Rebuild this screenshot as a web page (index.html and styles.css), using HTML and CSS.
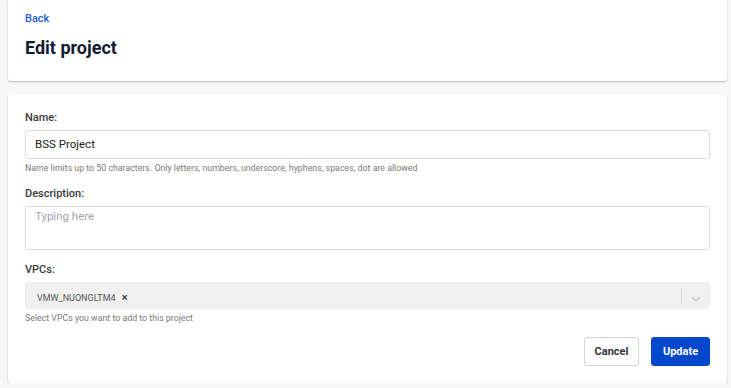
FILE: index.html
```html
<!DOCTYPE html>
<html lang="en">
<head>
    <meta charset="UTF-8">
    <title>Edit project</title>
    <link rel="stylesheet" href="styles.css">
</head>
<body>
<div class="page">
    <div class="card head-card">
        <a class="back" href="#">Back</a>
        <h1 class="title">Edit project</h1>
    </div>
    <div class="card form-card">
        <div class="field">
            <label class="label">Name:</label>
            <div class="input">BSS Project</div>
            <p class="hint">Name limits up to 50 characters. Only letters, numbers, underscore, hyphens, spaces, dot are allowed</p>
        </div>
        <div class="field">
            <label class="label">Description:</label>
            <div class="input textarea placeholder">Typing here</div>
        </div>
        <div class="field">
            <label class="label">VPCs:</label>
            <div class="select">
                <div class="tags">
                    <span class="tag">VMW_NUONGLTM4 <span class="tag-x">&times;</span></span>
                </div>
                <div class="select-arrow">
                    <svg width="12" height="12" viewBox="0 0 12 12"><path d="M2 4l4 4 4-4" fill="none" stroke="#c4c4c4" stroke-width="1.3"/></svg>
                </div>
            </div>
            <p class="hint">Select VPCs you want to add to this project</p>
        </div>
        <div class="actions">
            <button class="btn btn-cancel">Cancel</button>
            <button class="btn btn-update">Update</button>
        </div>
    </div>
</div>
</body>
</html>
```
FILE: styles.css
```css
*{
    margin: 0;
    padding: 0;
    box-sizing: border-box;
}
body{
    background-color: #f7f7f7;
    font-family: Roboto, "Liberation Sans", sans-serif;
    color: #333;
}
.page{
    padding: 0 4px 0 8px;
    display: flex;
    flex-direction: column;
    gap: 13px;
}
.card{
    background-color: #ffffff;
    border-radius: 3px;
    box-shadow: 0 1px 2px rgba(0,0,0,0.25);
    padding: 0 17px;
}
.head-card{
    height: 81px;
    border-top-left-radius: 0;
    border-top-right-radius: 0;
    padding-top: 12px;
}
.back{
    display: block;
    font-size: 11px;
    font-weight: 500;
    color: #1c5bd1;
    text-decoration: none;
    line-height: 14px;
}
.title{
    margin-top: 10px;
    font-size: 18px;
    font-weight: 700;
    color: #121a33;
    line-height: 24px;
}
.form-card{
    height: 289px;
    padding-top: 17px;
}
.field{
    margin-bottom: 13px;
}
.label{
    display: block;
    font-size: 11px;
    font-weight: 500;
    color: #3a3a3a;
    line-height: 14px;
    margin-bottom: 5px;
}
.input{
    height: 29px;
    border: 1px solid #dcdcdc;
    border-radius: 3px;
    padding: 0 9px;
    font-size: 11.5px;
    line-height: 27px;
    color: #222;
}
.textarea{
    height: 44px;
    line-height: 16px;
    padding-top: 1px;
}
.placeholder{
    color: #a3a3a8;
}
.hint{
    font-size: 8.8px;
    color: #7a7a7a;
    line-height: 12px;
    margin-top: 3px;
}
.select{
    height: 27px;
    border-radius: 3px;
    background-color: #f0f0f0;
    border: 1px solid #ebebeb;
    display: flex;
    align-items: center;
    justify-content: space-between;
}
.tags{
    padding-left: 11px;
}
.tag{
    font-size: 9px;
    color: #555;
}
.tag-x{
    margin-left: 4px;
    font-size: 11px;
    font-weight: 700;
    color: #444;
}
.select-arrow{
    height: 16px;
    border-left: 1px solid #dedede;
    padding: 2px 7px 0 8px;
}
.actions{
    display: flex;
    justify-content: flex-end;
    gap: 12px;
}
.btn{
    height: 29px;
    border-radius: 3px;
    font-family: Roboto, "Liberation Sans", sans-serif;
    font-size: 11px;
    font-weight: 700;
}
.btn-cancel{
    width: 55px;
    background-color: #ffffff;
    border: 1px solid #d4d4d4;
    color: #333;
}
.btn-update{
    width: 59px;
    background-color: #0047cc;
    border: 1px solid #0047cc;
    color: #ffffff;
}
```
